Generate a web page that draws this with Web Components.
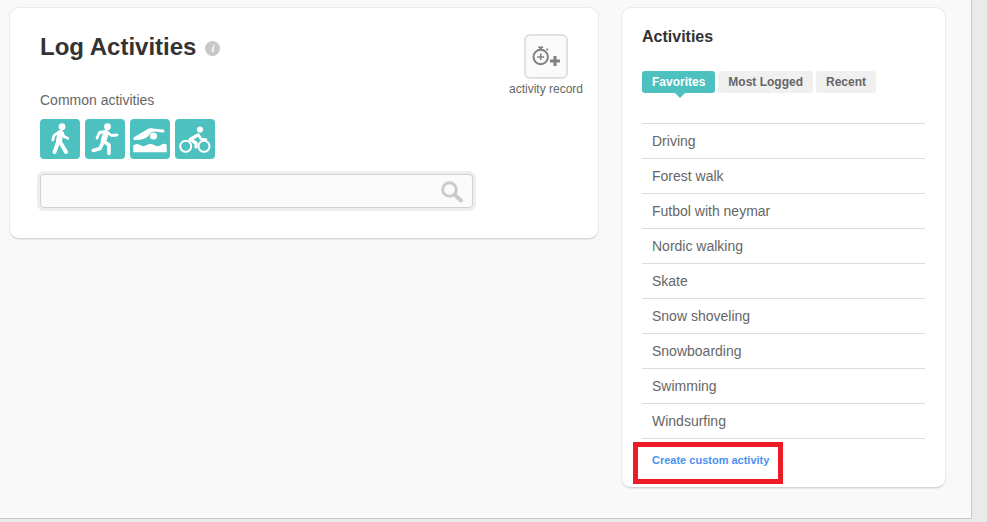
<!DOCTYPE html>
<html><head><meta charset="utf-8">
<style>
html,body{margin:0;padding:0;height:100%;background:#eaeaea;overflow:hidden;font-family:"Liberation Sans",Arial,sans-serif;color:#666}
</style></head><body>
<app-shell>
  <log-card></log-card>
  <activities-card>
    <activity-row>Driving</activity-row>
    <activity-row>Forest walk</activity-row>
    <activity-row>Futbol with neymar</activity-row>
    <activity-row>Nordic walking</activity-row>
    <activity-row>Skate</activity-row>
    <activity-row>Snow shoveling</activity-row>
    <activity-row>Snowboarding</activity-row>
    <activity-row>Swimming</activity-row>
    <activity-row>Windsurfing</activity-row>
  </activities-card>
</app-shell>
<script>
function def(name,html){customElements.define(name,class extends HTMLElement{constructor(){super();this.attachShadow({mode:'open'}).innerHTML=html;}});}
const I={
walk:`<circle cx="22" cy="7.700" r="3.400" fill="#fff"/><g fill="none" stroke="#fff" stroke-linecap="round" stroke-linejoin="round"><path d="M20.500 14 19 22" stroke-width="6"/><path d="M18.500 22 14.500 33" stroke-width="4"/><path d="M19.500 22 26 33" stroke-width="4"/><path d="M22 13.500 24 17.500 27.800 19.300" stroke-width="2.800"/><path d="M18 13.500 14 16.500 12.800 21" stroke-width="2.800"/></g>`,
run:`<circle cx="22.500" cy="7.700" r="3.400" fill="#fff"/><g fill="none" stroke="#fff" stroke-linecap="round" stroke-linejoin="round"><path d="M21 14 18.500 21.500" stroke-width="5.600"/><path d="M18.500 22 24 26 24 34.500" stroke-width="3.600"/><path d="M17.500 24 15 29.500 8.300 31.500" stroke-width="3.600"/><path d="M22 13 26.500 16.500 32 16" stroke-width="2.800"/><path d="M21 12.500 14.500 13.500 12 19" stroke-width="2.800"/></g>`,
swim:`<circle cx="23.500" cy="17" r="3.600" fill="#fff"/><path fill="#fff" d="M3.500 18.500 17 10.500C19 9 21 9 23 9.500L33 10.500C35 11 35 13.500 33 13.500L24 12.500 21 13.500 18 17.500C16 19 14 19.500 12 20.200 9 21 6.500 21.200 3.500 21Z"/><path fill="#fff" d="M3.300 26.500C6 24.500 8 24.500 10 26 12 27.500 14.500 27.500 17 26 19 24.500 22 24.500 24 26 26 27.500 29 27.500 31 26 33 24.500 35 24.500 36.700 25.500V33.300H3.300Z"/>`,
bike:`<g fill="none" stroke="#fff" stroke-width="2"><circle cx="10.700" cy="27.300" r="5.500"/><circle cx="29" cy="27.300" r="5.500"/></g><circle cx="25" cy="10.500" r="3.100" fill="#fff"/><g fill="none" stroke="#fff" stroke-linecap="round" stroke-linejoin="round"><path d="M23 16 15 20.500 21 24 21 28" stroke-width="3.200"/><path d="M23.500 16 26 20 31 20.500" stroke-width="2.600"/></g>`};
customElements.define('sport-icon',class extends HTMLElement{connectedCallback(){if(this.shadowRoot)return;this.attachShadow({mode:'open'}).innerHTML=`<style>:host{display:block;width:40px;height:40px;background:#4dc1c0;border-radius:4px}svg{display:block}</style><svg width="40" height="40" viewBox="0 0 40 40">${I[this.getAttribute('kind')]||''}</svg>`;}});
def('app-shell',`<style>:host{display:flex;align-items:flex-start;gap:22px;box-sizing:border-box;width:972px;height:519px;padding:7px 0 0 9px;background:#f9f9f9;border-right:1px solid #c8c8c8;border-bottom:1px solid #c8c8c8}</style><slot></slot>`);
def('ui-card',`<style>:host{display:block;box-sizing:border-box;background:#fff;border:1px solid #ebebeb;border-bottom:1px solid #d6d6d6;border-radius:10px;box-shadow:0 1px 1px #e6e6e6}</style><slot></slot>`);
def('log-card',`<style>
:host{display:block;width:590px}
ui-card{display:flex;justify-content:space-between;height:232px;padding:0 15px 0 30px}
h1{margin:23px 0 0;font-size:24px;line-height:32px;font-weight:bold;color:#333;display:flex;align-items:center;gap:9px}
.i{width:15px;height:15px;border-radius:50%;background:#c8c8c8;color:#fff;font:italic bold 11px/15px "Liberation Serif",serif;text-align:center;margin-top:2px}
p{margin:27px 0 0;font-size:14px;line-height:20px;color:#666}
.icons{display:flex;gap:5px;margin-top:9px}
.search{box-sizing:border-box;width:433px;height:34px;margin-top:15px;background:#fbfbfb;border:1px solid #d2d2d2;border-radius:4px;box-shadow:0 0 0 3px #eeeeee;display:flex;justify-content:flex-end;align-items:center;padding-right:9px}
.rec{display:flex;flex-direction:column;align-items:center;margin-top:26px;font-size:12px;line-height:14px;color:#666}
.btn{box-sizing:border-box;width:44px;height:45px;border:2px solid #e0e0e0;border-radius:6px;background:#fafafa;margin-bottom:3px}
svg{display:block}
</style><ui-card><div>
<h1>Log Activities<span class="i">i</span></h1>
<p>Common activities</p>
<div class="icons"><sport-icon kind="walk"></sport-icon><sport-icon kind="run"></sport-icon><sport-icon kind="swim"></sport-icon><sport-icon kind="bike"></sport-icon></div>
<div class="search"><svg width="23" height="23" viewBox="0 0 23 23" fill="none" stroke="#cbcbcb"><circle cx="9.500" cy="9.500" r="6.800" stroke-width="3"/><path d="M14.500 14.500 21 20.500" stroke-width="4" stroke-linecap="round"/></svg></div>
</div>
<div class="rec"><div class="btn"><svg width="40" height="41" viewBox="0 0 40 41" fill="none"><g stroke="#808080"><circle cx="14.700" cy="21" r="7.200" stroke-width="2"/><path d="M14.700 11V13.500" stroke-width="2.500"/><path d="M12.200 11.200H17.200" stroke-width="1.500"/><path d="M11.200 21H18.200M14.700 17.500V24" stroke-width="1.500"/><path d="M20.500 14 22 13" stroke-width="1.800"/><path d="M29 20V30M24 25H34" stroke-width="3"/></g></svg></div>activity record</div></ui-card>`);
def('activity-row',`<style>:host{display:block;box-sizing:border-box;height:35px;padding-left:10px;border-bottom:1px solid #dcdcdc;font-size:14px;line-height:35px;color:#666}</style><slot></slot>`);
def('activities-card',`<style>
:host{display:block;width:325px;position:relative}
ui-card{display:block;height:481px;padding:0 20px}
h2{margin:19px 0 0;font-size:16px;line-height:19px;font-weight:bold;color:#333}
.tabs{display:flex;gap:3px;margin-top:25px}
.tab{height:22px;padding:0 10px;background:#f0f0f0;border-radius:3px;font-size:12px;font-weight:bold;line-height:22px;color:#666;position:relative}
.tab.on{background:#4dc1c0;color:#fff}
.tab.on::after{content:"";position:absolute;left:33px;top:22px;border:5px solid transparent;border-top-color:#4dc1c0;border-bottom:0}
.list{margin-top:30px;border-top:1px solid #dcdcdc}
a{display:block;margin:14px 0 0 10px;font-size:11px;line-height:14px;font-weight:bold;color:#4a90f0}
.mark{position:absolute;box-sizing:border-box;left:12px;top:435px;width:150px;height:42px;border:5px solid #ed1c24}
</style><ui-card><h2>Activities</h2>
<div class="tabs"><div class="tab on">Favorites</div><div class="tab">Most Logged</div><div class="tab">Recent</div></div>
<div class="list"><slot></slot></div>
<a>Create custom activity</a></ui-card><div class="mark"></div>`);
</script>
</body></html>
